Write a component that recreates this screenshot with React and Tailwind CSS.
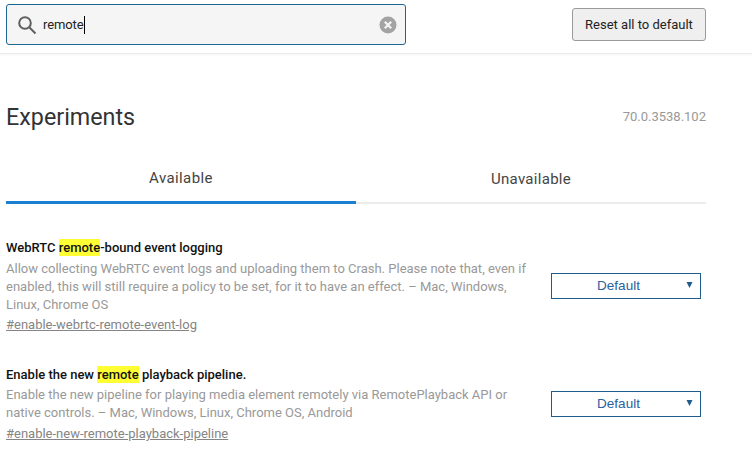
import React from "react";

const roboto = "font-['Roboto','Liberation_Sans',sans-serif]";

function Mark({ children }) {
  return <mark className="bg-[#ffff33] text-inherit py-[1px]">{children}</mark>;
}

function Flag({ title, desc, link, className = "", descClass = "mt-[4px]", linkClass = "mt-[2px]" }) {
  return (
    <div className={`flex items-center justify-between pr-[5px] ${className}`}>
      <div className="w-[528px]">
        <h2 className="text-[13px] leading-[16px] font-medium text-[#111111]">{title}</h2>
        <p className={`text-[13px] leading-[18px] text-[#999999] ${descClass}`}>{desc}</p>
        <a className={`block text-[13px] leading-[18px] text-[#858585] underline ${linkClass}`}>{link}</a>
      </div>
      <div className="relative mb-[2px] w-[150px] h-[26px] border border-[#1f5c8c] flex items-center justify-center font-['Liberation_Sans',sans-serif] text-[13.5px] text-[#2a62a0] bg-white">
        <span className="ml-[-15px]">Default</span>
        <svg className="absolute right-[7px] top-[7px]" width="7" height="8" viewBox="0 0 7 8">
          <path d="M0.5 1H6.5L3.5 7Z" fill="#1f5c8c" />
        </svg>
      </div>
    </div>
  );
}

export default function App() {
  return (
    <div className={`w-[752px] h-[455px] overflow-hidden bg-white ${roboto}`}>
      <header className="h-[54px] flex items-start justify-between pl-[6px] pr-[46px] border-b border-[#ececec] shadow-[0_1px_2px_rgba(0,0,0,0.05)]">
        <div className="mt-[4px] w-[400px] h-[41px] rounded-[3px] border border-[#1f6591] bg-[#f5f5f6] flex items-center pl-[10px] pr-[8px]">
          <svg width="20" height="20" viewBox="0 0 20 20" fill="none" stroke="#5f5f5f" strokeWidth="2">
            <circle cx="8" cy="8" r="5.8" />
            <path d="M12.5 12.5L18.5 18.5" />
          </svg>
          <span className="ml-[6px] text-[13px] tracking-[-0.1px] text-[#222222] border-r border-black leading-[18px]">remote</span>
          <svg className="ml-auto" width="18" height="18" viewBox="0 0 18 18">
            <circle cx="9" cy="9" r="8.5" fill="#a3a3a3" />
            <path d="M5.8 5.8L12.2 12.2M12.2 5.8L5.8 12.2" stroke="#f5f5f6" strokeWidth="2.2" />
          </svg>
        </div>
        <button className="mt-[8px] w-[134px] h-[33px] rounded-[3px] border border-[#9a9a9a] bg-[#efefef] text-[13px] text-[#222222]">
          Reset all to default
        </button>
      </header>

      <main className="pl-[6px] pr-[46px]">
        <div className="flex items-center justify-between pt-[47px]">
          <h1 className="text-[23.3px] leading-[32px] text-[#333333]">Experiments</h1>
          <span className="text-[13px] text-[#999999]">70.0.3538.102</span>
        </div>

        <div className="flex mt-[32px] border-b-[2px] border-[#ececec] h-[39px]">
          <div className="w-[350px] h-[39px] border-b-[3px] border-[#1a7fd0] text-center text-[15px] leading-[20px] pt-[3px] text-[#444444] tracking-[0.4px]">
            Available
          </div>
          <div className="w-[350px] text-center text-[15px] leading-[20px] pt-[4px] text-[#444444] tracking-[0.3px]">
            Unavailable
          </div>
        </div>

        <Flag
          className="mt-[36px]"
          title={<>WebRTC <Mark>remote</Mark>-bound event logging</>}
          desc="Allow collecting WebRTC event logs and uploading them to Crash. Please note that, even if enabled, this will still require a policy to be set, for it to have an effect. – Mac, Windows, Linux, Chrome OS"
          link="#enable-webrtc-remote-event-log"
        />
        <Flag
          className="mt-[33px]"
          descClass="mt-[3px]"
          linkClass="mt-[3px]"
          title={<>Enable the new <Mark>remote</Mark> playback pipeline.</>}
          desc="Enable the new pipeline for playing media element remotely via RemotePlayback API or native controls. – Mac, Windows, Linux, Chrome OS, Android"
          link="#enable-new-remote-playback-pipeline"
        />
      </main>
    </div>
  );
}
